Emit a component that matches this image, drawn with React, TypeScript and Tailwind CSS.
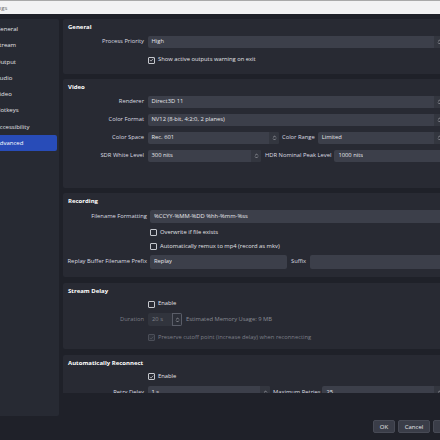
import React from 'react';

function Chevrons() {
  return (
    <svg viewBox="0 0 6 10" className="h-[8px] w-[5px] text-[#b9bbc2]" fill="none" stroke="currentColor" strokeWidth="0.8" strokeLinecap="round" strokeLinejoin="round">
      <polyline points="1.6,3.9 3,2.5 4.4,3.9" />
      <polyline points="1.6,6.1 3,7.5 4.4,6.1" />
    </svg>
  );
}

function Check({ checked = false, disabled = false }: { checked?: boolean; disabled?: boolean }) {
  return (
    <span
      className={`flex h-[7px] w-[7px] shrink-0 items-center justify-center rounded-[1px] border-[0.8px] ${
        disabled ? 'border-[#4b4e58] bg-[#30333c]' : 'border-[#c4c6cc]'
      }`}
    >
      {checked && (
        <svg viewBox="0 0 8 8" className={`h-[6px] w-[6px] ${disabled ? 'text-[#5a5d66]' : 'text-[#e8e9ec]'}`} fill="none" stroke="currentColor" strokeWidth="1" strokeLinecap="round" strokeLinejoin="round">
          <polyline points="1.6,4.2 3.2,5.8 6.4,2.2" />
        </svg>
      )}
    </span>
  );
}

// combo box / spin box with the stacked chevrons at its end
function Combo({ text, className = '', disabled = false }: { text: string; className?: string; disabled?: boolean }) {
  return (
    <div className={`flex h-full items-center overflow-hidden rounded-[2px] ${disabled ? 'bg-[#31343d] text-[#80828b]' : 'bg-[#3c3f4a] text-[#e6e7ea]'} ${className}`}>
      <span className="flex-1 truncate pl-[4px]">{text}</span>
      <span className={`flex h-full w-[10px] shrink-0 items-center justify-center ${disabled ? 'border-[0.8px] border-[#5a5d68] bg-[#2c2f38]' : 'bg-[#33363f]'}`}>
        <Chevrons />
      </span>
    </div>
  );
}

function Field({ text, className = '' }: { text: string; className?: string }) {
  return (
    <div className={`flex h-full items-center rounded-[2px] bg-[#3c3f4a] pl-[4px] text-[#e6e7ea] ${className}`}>
      <span className="truncate">{text}</span>
    </div>
  );
}

function Panel({ title, className, children }: { title: string; className: string; children: React.ReactNode }) {
  return (
    <div className={`flex shrink-0 flex-col rounded-[2px] bg-[#282a33] pl-[5px] pr-[6px] pt-[4px] ${className}`}>
      <div className="flex h-[8px] items-center text-[6px] font-bold text-white">{title}</div>
      {children}
    </div>
  );
}

const sections = ['General', 'Stream', 'Output', 'Audio', 'Video', 'Hotkeys', 'Accessibility', 'Advanced'];

export default function App() {
  return (
    <div className="relative h-[440px] w-[440px] overflow-hidden whitespace-nowrap bg-[#1f2129] font-['Open_Sans',sans-serif] text-[5.8px] leading-none text-[#dcdde1]">
      <div className="-ml-[20px] flex h-[440px] w-[500px] flex-col">
        {/* title bar */}
        <div className="flex h-[14px] shrink-0 items-center border-t border-[#a9a9a9] bg-[#f2f2f3] pl-[5px] text-[6px] text-[#6a6a6a]">
          Settings
        </div>

        <div className="flex flex-1 flex-col pt-[5px]">
          <div className="flex h-[397px]">
            {/* sidebar */}
            <div className="flex h-[397px] w-[79px] shrink-0 flex-col rounded-[2px] bg-[#272a33] pt-[1.8px]">
              {sections.map((s) => (
                <div
                  key={s}
                  className={`mr-[2px] flex h-[16.3px] items-center rounded-[2px] pl-[16px] text-[6px] ${
                    s === 'Advanced' ? 'bg-[#284cb8] text-white' : 'text-[#e2e3e7]'
                  }`}
                >
                  {s}
                </div>
              ))}
            </div>

            {/* scroll area */}
            <div className="ml-[4px] flex h-[374px] w-[387px] flex-col gap-[5px] overflow-hidden">
              <Panel title="General" className="h-[55px]">
                <div className="mt-[5px] flex h-[12px] items-center">
                  <span className="w-[76px] shrink-0 text-right">Process Priority</span>
                  <Combo text="High" className="ml-[3.5px] flex-1" />
                </div>
                <div className="mt-[6px] flex h-[12px] items-center pl-[80px]">
                  <Check checked />
                  <span className="ml-[3px] text-[#e2e3e7]">Show active outputs warning on exit</span>
                </div>
              </Panel>

              <Panel title="Video" className="h-[109px]">
                <div className="mt-[5px] flex h-[12px] items-center">
                  <span className="w-[76px] shrink-0 text-right">Renderer</span>
                  <Combo text="Direct3D 11" className="ml-[3.5px] flex-1" />
                </div>
                <div className="mt-[6px] flex h-[12px] items-center">
                  <span className="w-[76px] shrink-0 text-right">Color Format</span>
                  <Combo text="NV12 (8-bit, 4:2:0, 2 planes)" className="ml-[3.5px] flex-1" />
                </div>
                <div className="mt-[6px] flex h-[12px] items-center">
                  <span className="w-[76px] shrink-0 text-right">Color Space</span>
                  <Combo text="Rec. 601" className="ml-[3.5px] w-[131.5px] shrink-0" />
                  <span className="ml-[3px] shrink-0">Color Range</span>
                  <Combo text="Limited" className="ml-[3px] flex-1" />
                </div>
                <div className="mt-[6px] flex h-[12px] items-center">
                  <span className="w-[76px] shrink-0 text-right">SDR White Level</span>
                  <Combo text="300 nits" className="ml-[3.5px] w-[113.5px] shrink-0" />
                  <span className="ml-[4px] shrink-0">HDR Nominal Peak Level</span>
                  <Field text="1000 nits" className="ml-[3px] flex-1" />
                </div>
              </Panel>

              <Panel title="Recording" className="h-[84px]">
                <div className="mt-[5px] flex h-[13px] items-center">
                  <span className="w-[79px] shrink-0 text-right">Filename Formatting</span>
                  <Field text="%CCYY-%MM-%DD %hh-%mm-%ss" className="ml-[3px] flex-1" />
                </div>
                <div className="mt-[3px] flex h-[13px] items-center pl-[82px]">
                  <Check />
                  <span className="ml-[3px] text-[#e2e3e7]">Overwrite if file exists</span>
                </div>
                <div className="mt-[1px] flex h-[13px] items-center pl-[82px]">
                  <Check />
                  <span className="ml-[3px] text-[#e2e3e7]">Automatically remux to mp4 (record as mkv)</span>
                </div>
                <div className="mt-[2px] flex h-[14px] items-center">
                  <span className="flex w-[79px] shrink-0 justify-end">Replay Buffer Filename Prefix</span>
                  <Field text="Replay" className="ml-[3px] w-[137px] shrink-0" />
                  <span className="ml-[4px] shrink-0">Suffix</span>
                  <Field text="" className="ml-[4px] flex-1" />
                </div>
              </Panel>

              <Panel title="Stream Delay" className="mt-[1px] h-[66px]">
                <div className="mt-[3px] flex h-[12px] items-center pl-[80px]">
                  <Check />
                  <span className="ml-[3px] text-[#e2e3e7]">Enable</span>
                </div>
                <div className="mt-[3px] flex h-[13px] items-center">
                  <span className="w-[76px] shrink-0 text-right text-[#7d7f88]">Duration</span>
                  <Combo text="20 s" disabled className="ml-[4px] w-[34px] shrink-0" />
                  <span className="ml-[4px] text-[#8a8c94]">Estimated Memory Usage: 9 MB</span>
                </div>
                <div className="mt-[5px] flex h-[13px] items-center pl-[80px]">
                  <Check checked disabled />
                  <span className="ml-[3px] text-[#7d7f88]">Preserve cutoff point (increase delay) when reconnecting</span>
                </div>
              </Panel>

              <Panel title="Automatically Reconnect" className="mt-[1px] h-[80px]">
                <div className="mt-[3px] flex h-[13px] items-center pl-[80px]">
                  <Check checked />
                  <span className="ml-[3px] text-[#e2e3e7]">Enable</span>
                </div>
                <div className="mt-[3px] flex h-[13px] items-center">
                  <span className="w-[76px] shrink-0 text-right">Retry Delay</span>
                  <Combo text="1 s" className="ml-[3.5px] w-[122.5px] shrink-0" />
                  <span className="ml-[3px] shrink-0">Maximum Retries</span>
                  <Combo text="25" className="ml-[2px] flex-1" />
                </div>
              </Panel>
            </div>
          </div>

          {/* dialog buttons */}
          <div className="flex justify-end gap-[3px] pr-[15px] pt-[4px]">
            {['OK', 'Cancel', 'Apply'].map((b) => (
              <div
                key={b}
                className={`flex h-[13px] items-center justify-center rounded-[2px] border-[0.8px] border-[#474a55] bg-[#3a3d48] text-[6px] text-[#e6e7ea] ${
                  b === 'OK' ? 'w-[22px]' : 'w-[32px]'
                }`}
              >
                {b}
              </div>
            ))}
          </div>
        </div>
      </div>
    </div>
  );
}
